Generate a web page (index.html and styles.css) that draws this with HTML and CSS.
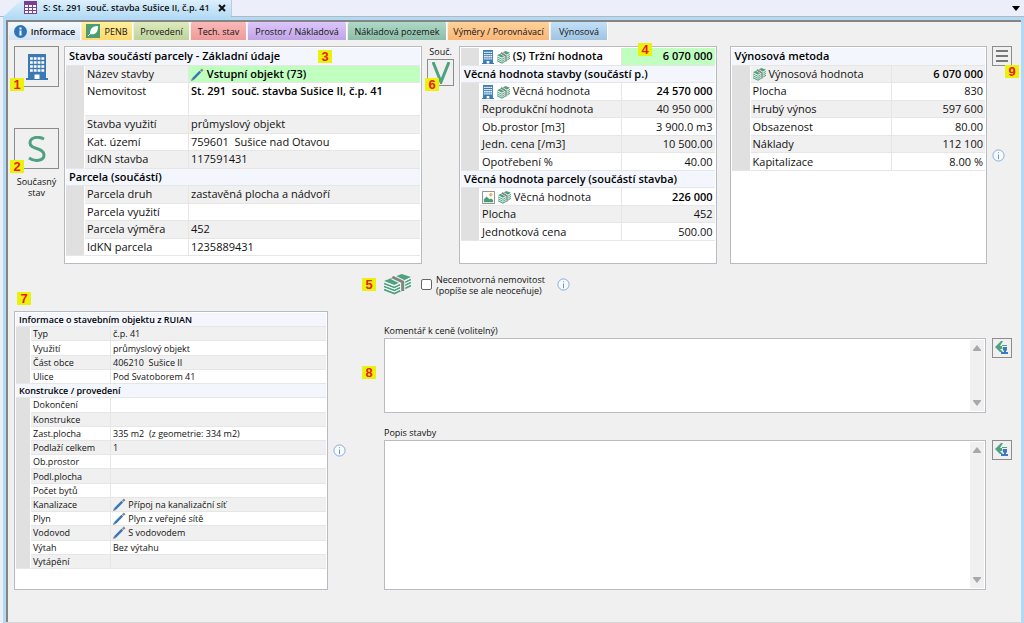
FILE: index.html
```
<!DOCTYPE html>
<html lang="cs">
<head>
  <meta charset="UTF-8">
  <meta name="viewport" content="width=device-width, initial-scale=1.0">
  <title>St. 291 souč. stavba Sušice II, č.p. 41</title>
  <link rel="stylesheet" href="styles.css">
</head>
<body>
  <!-- Shared icons -->
  <svg class="sprite" aria-hidden="true">
    <symbol id="building" viewBox="0 0 22 26" preserveAspectRatio="none">
      <path fill="#3b79b5" d="M2 0h18v24h2v2H0v-2h2z"/>
      <path fill="none" stroke="#fff" stroke-width="2.400" stroke-dasharray="2.800 1" d="M4 4.500h14.200M4 8.500h14.200M4 12.500h14.200M4 16.500h14.200"/>
      <path fill="#fff" d="M8.500 20.500h5V25h-5z"/>
    </symbol>
    <symbol id="money" viewBox="0 0 26 21" preserveAspectRatio="none">
      <path fill="#4fa27f" d="M0 7L17 0l9 3-16 8z"/>
      <path fill="none" stroke="#4fa27f" stroke-width="2" d="M0 9.500l10 4 16-8M0 12.500l10 4 16-8M0 15.500l10 4 16-8"/>
      <path fill="none" stroke="#f4f8f6" d="M0 8l10 4 16-8M0 11l10 4 16-8M0 14l10 4 16-8"/>
      <path fill="none" stroke="#f4f8f6" stroke-width="5" d="M8 3l10 5v9"/>
      <path fill="none" stroke="#828685" stroke-width="3" d="M8 3l10 5v9"/>
    </symbol>
    <symbol id="pencil" viewBox="0 0 14 14">
      <path stroke="#3877b8" stroke-width="2.600" d="M2 12l8-8"/>
      <path stroke="#888" stroke-width="2.600" d="M10.500 3.500l2-2"/>
      <path fill="#777" d="M0 14l1-3 2 2z"/>
    </symbol>
    <symbol id="info" viewBox="0 0 14 14">
      <circle cx="7" cy="7" r="6" fill="#f7faff" stroke="#7fa6d6"/>
      <path stroke="#5c8cc6" d="M7 6v5M7 3.500v1"/>
    </symbol>
    <symbol id="landscape" viewBox="0 0 14 14">
      <path fill="#fff" stroke="#888" d="M.5.5h13v13H.5z"/>
      <path fill="#4a9b78" d="M2 12V9l3-3 3 3 2-1 2 2v2z"/>
      <circle cx="9.500" cy="4" r="1.800" fill="#f0b45c"/>
    </symbol>
    <symbol id="restore" viewBox="0 0 14 14">
      <path fill="#4fa27f" d="M0 6l6-6h2L5 5h7v3H5l4 4H6z"/>
      <path fill="#f0f0f0" d="M7 5h7v9H5v-3h3z"/>
      <path fill="#4fa27f" d="M7 4h5v1H7z"/>
      <path fill="#3b79c4" d="M8 6h4v3l-1 1v1h2v2H6v-2h3v-1L8 9z"/>
    </symbol>
    <symbol id="up" viewBox="0 0 8 6"><path fill="#a8a8a8" d="M4 0l4 5v1H0V5z"/></symbol>
    <symbol id="down" viewBox="0 0 8 6"><path fill="#a8a8a8" d="M0 0h8v1L4 6 0 1z"/></symbol>
  </svg>

  <header class="titlebar">
    <div class="doc-tab">
      <svg width="13" height="13" viewBox="0 0 13 13"><path fill="#7a3f92" d="M0 0h13v13H0z"/><path fill="#fff" d="M1 4h3v2H1zM5 4h3v2H5zM9 4h3v2H9zM1 7h3v2H1zM5 7h3v2H5zM9 7h3v2H9zM1 10h3v2H1zM5 10h3v2H5zM9 10h3v2H9z"/></svg>
      <span class="doc-name">S: St. 291&nbsp; souč. stavba Sušice II, č.p. 41</span>
      <button class="doc-close" aria-label="Zavřít"><svg width="8" height="8" viewBox="0 0 8 8"><path stroke="#111" stroke-width="2" d="M1 1l6 6M7 1L1 7"/></svg></button>
    </div>
    <button class="doc-list" aria-label="Seznam oken"><svg width="8" height="5" viewBox="0 0 8 5"><path d="M0 0h8L4 5z"/></svg></button>
  </header>

  <main class="frame">
    <nav class="tabs">
      <button class="tab active"><svg width="13" height="13" viewBox="0 0 13 13"><circle cx="6.500" cy="6.500" r="6.500" fill="#2e75b6"/><path stroke="#fff" stroke-width="2" d="M6.500 5.500v5M6.500 2.500v2"/></svg>Informace</button>
      <button class="tab penb"><svg width="14" height="14" viewBox="0 0 14 14"><path fill="#4a9d74" d="M0 0h14v14H0z"/><path fill="#fff" d="M12 2c0 7-3 9-8 8 0-5 2-8 8-8z"/><path stroke="#fff" d="M2 12l3-3"/></svg>PENB</button>
      <button class="tab green">Provedení</button>
      <button class="tab red">Tech. stav</button>
      <button class="tab purple">Prostor / Nákladová</button>
      <button class="tab teal">Nákladová pozemek</button>
      <button class="tab orange">Výměry / Porovnávací</button>
      <button class="tab blue">Výnosová</button>
    </nav>

    <section class="upper">
      <div class="side">
        <div class="side-item">
          <button class="big-btn" aria-label="Stavba"><svg width="22" height="26"><use href="#building"/></svg></button>
          <span class="badge corner">1</span>
        </div>
        <div class="side-item">
          <button class="big-btn" aria-label="Současný stav"><svg width="18" height="26" viewBox="0 0 18 26"><path fill="none" stroke="#4fa27f" stroke-width="3" d="M16 3C10 0 2 1 2 7c0 7 14 4 14 12 0 6-9 7-15 3"/></svg></button>
          <span class="badge corner">2</span>
          <span class="side-label">Současný stav</span>
        </div>
      </div>

      <div class="panel basic">
        <span class="badge b3">3</span>
        <table class="props">
          <colgroup><col class="c-gutter"><col class="c-name"><col></colgroup>
          <tr class="head"><th colspan="3">Stavba součástí parcely - Základní údaje</th></tr>
          <tr class="alt"><td class="gutter" rowspan="5"></td><td>Název stavby</td><td class="hit strong"><svg width="13" height="13"><use href="#pencil"/></svg> Vstupní objekt (73)</td></tr>
          <tr class="tall"><td>Nemovitost</td><td class="strong">St. 291&nbsp; souč. stavba Sušice II, č.p. 41</td></tr>
          <tr class="alt"><td>Stavba využití</td><td>průmyslový objekt</td></tr>
          <tr><td>Kat. území</td><td>759601&nbsp; Sušice nad Otavou</td></tr>
          <tr class="alt"><td>IdKN stavba</td><td>117591431</td></tr>
          <tr class="head"><th colspan="3">Parcela (součástí)</th></tr>
          <tr class="alt"><td class="gutter" rowspan="4"></td><td>Parcela druh</td><td>zastavěná plocha a nádvoří</td></tr>
          <tr><td>Parcela využití</td><td></td></tr>
          <tr class="alt"><td>Parcela výměra</td><td>452</td></tr>
          <tr><td>IdKN parcela</td><td>1235889431</td></tr>
        </table>
      </div>

      <div class="part">
        <span>Souč.</span>
        <button class="part-btn" aria-label="Věcná hodnota"><svg width="18" height="22" viewBox="0 0 18 22"><path fill="none" stroke="#4fa27f" stroke-width="3" d="M1 0l8 20 8-20"/></svg></button>
        <span class="badge corner">6</span>
      </div>

      <div class="panel values">
        <span class="badge b4">4</span>
        <table class="props numbers eleven">
          <colgroup><col class="c-gutter"><col><col class="c-value"></colgroup>
          <tr><td class="gutter"></td><td class="strong"><svg width="12" height="14"><use href="#building"/></svg> <svg width="13" height="13"><use href="#money"/></svg> (S) Tržní hodnota</td><td class="hit strong">6 070 000</td></tr>
          <tr class="head"><th colspan="3">Věcná hodnota stavby (součástí p.)</th></tr>
          <tr><td class="gutter" rowspan="5"></td><td><svg width="12" height="14"><use href="#building"/></svg> <svg width="13" height="13"><use href="#money"/></svg> Věcná hodnota</td><td class="strong">24 570 000</td></tr>
          <tr class="alt"><td>Reprodukční hodnota</td><td>40 950 000</td></tr>
          <tr><td>Ob.prostor [m3]</td><td>3 900.0 m3</td></tr>
          <tr class="alt"><td>Jedn. cena [/m3]</td><td>10 500.00</td></tr>
          <tr><td>Opotřebení %</td><td>40.00</td></tr>
          <tr class="head"><th colspan="3">Věcná hodnota parcely (součástí stavba)</th></tr>
          <tr><td class="gutter" rowspan="3"></td><td><svg width="13" height="13"><use href="#landscape"/></svg> <svg width="13" height="13"><use href="#money"/></svg> Věcná hodnota</td><td class="strong">226 000</td></tr>
          <tr class="alt"><td>Plocha</td><td>452</td></tr>
          <tr><td>Jednotková cena</td><td>500.00</td></tr>
        </table>
      </div>

      <div class="panel income">
        <table class="props numbers seven">
          <colgroup><col class="c-gutter"><col><col class="c-value"></colgroup>
          <tr class="head"><th colspan="3">Výnosová metoda</th></tr>
          <tr class="alt"><td class="gutter" rowspan="6"></td><td><svg width="13" height="13"><use href="#money"/></svg> Výnosová hodnota</td><td class="strong">6 070 000</td></tr>
          <tr><td>Plocha</td><td>830</td></tr>
          <tr class="alt"><td>Hrubý výnos</td><td>597 600</td></tr>
          <tr><td>Obsazenost</td><td>80.00</td></tr>
          <tr class="alt"><td>Náklady</td><td>112 100</td></tr>
          <tr><td>Kapitalizace</td><td>8.00 %</td></tr>
        </table>
      </div>

      <div class="tools">
        <button class="small-btn" aria-label="Nabídka"><svg width="12" height="14" viewBox="0 0 12 14"><path stroke="#777" stroke-width="2" d="M0 2h12M0 7h12M0 12h12"/></svg></button>
        <span class="badge b9">9</span>
        <svg class="info" width="13" height="13"><use href="#info"/></svg>
      </div>
    </section>

    <section class="lower">
      <div class="registry">
        <div class="registry-top"><span class="badge">7</span></div>
        <div class="panel">
          <table class="props small">
            <colgroup><col class="c-gutter"><col class="c-name"><col></colgroup>
            <tr class="head"><th colspan="3">Informace o stavebním objektu z RUIAN</th></tr>
            <tr class="alt"><td class="gutter" rowspan="4"></td><td>Typ</td><td>č.p. 41</td></tr>
            <tr><td>Využití</td><td>průmyslový objekt</td></tr>
            <tr class="alt"><td>Část obce</td><td>406210&nbsp; Sušice II</td></tr>
            <tr><td>Ulice</td><td>Pod Svatoborem 41</td></tr>
            <tr class="head"><th colspan="3">Konstrukce / provedení</th></tr>
            <tr><td class="gutter" rowspan="12"></td><td>Dokončení</td><td></td></tr>
            <tr class="alt"><td>Konstrukce</td><td></td></tr>
            <tr><td>Zast.plocha</td><td>335 m2&nbsp; (z geometrie: 334 m2)</td></tr>
            <tr class="alt"><td>Podlaží celkem</td><td>1</td></tr>
            <tr><td>Ob.prostor</td><td></td></tr>
            <tr class="alt"><td>Podl.plocha</td><td></td></tr>
            <tr><td>Počet bytů</td><td></td></tr>
            <tr class="alt"><td>Kanalizace</td><td><svg width="13" height="13"><use href="#pencil"/></svg> Přípoj na kanalizační síť</td></tr>
            <tr><td>Plyn</td><td><svg width="13" height="13"><use href="#pencil"/></svg> Plyn z veřejné sítě</td></tr>
            <tr class="alt"><td>Vodovod</td><td><svg width="13" height="13"><use href="#pencil"/></svg> S vodovodem</td></tr>
            <tr><td>Výtah</td><td>Bez výtahu</td></tr>
            <tr class="alt"><td>Vytápění</td><td></td></tr>
          </table>
        </div>
      </div>

      <div class="middle">
        <svg class="info" width="13" height="13"><use href="#info"/></svg>
      </div>

      <div class="notes">
        <div class="option">
          <span class="badge outside">5</span>
          <svg width="27" height="21"><use href="#money"/></svg>
          <input type="checkbox" id="no-price">
          <label for="no-price">Necenotvorná nemovitost<br>(popíše se ale neoceňuje)</label>
          <svg class="info" width="13" height="13"><use href="#info"/></svg>
        </div>

        <label class="note-label" for="comment">Komentář k ceně (volitelný)</label>
        <div class="note-row comment">
          <span class="badge outside">8</span>
          <div class="memo">
            <textarea id="comment"></textarea>
            <div class="scroll"><svg width="8" height="6"><use href="#up"/></svg><svg width="8" height="6"><use href="#down"/></svg></div>
          </div>
          <button class="small-btn" aria-label="Vrátit komentář"><svg width="14" height="14"><use href="#restore"/></svg></button>
        </div>

        <label class="note-label" for="description">Popis stavby</label>
        <div class="note-row description">
          <div class="memo">
            <textarea id="description"></textarea>
            <div class="scroll"><svg width="8" height="6"><use href="#up"/></svg><svg width="8" height="6"><use href="#down"/></svg></div>
          </div>
          <button class="small-btn" aria-label="Vrátit popis"><svg width="14" height="14"><use href="#restore"/></svg></button>
        </div>
      </div>
    </section>
  </main>
</body>
</html>
```

FILE: styles.css
```
/* Global Styles */
* {
  box-sizing: border-box;
}

body {
  margin: 0;
  min-height: 100vh;
  display: flex;
  flex-direction: column;
  background: #eceefa;
  color: #111;
  font-family: "Open Sans", "Noto Sans", sans-serif;
  font-size: 9px;
  line-height: 11px;
}

button {
  font: inherit;
  color: inherit;
  padding: 0;
  margin: 0;
}

.sprite {
  position: absolute;
  width: 0;
  height: 0;
}

/* Title bar */
.titlebar {
  height: 17px;
  display: flex;
  justify-content: space-between;
  border-bottom: 1px solid #b4b8c0;
}

.doc-tab {
  display: flex;
  align-items: center;
  height: 17px;
  margin-left: 3px;
  padding: 0 5px 2px 21px;
  background: linear-gradient(#dceffc, #b5dcf5);
  border-right: 1px solid #a9b4c0;
  clip-path: polygon(18px 0, 100% 0, 100% 100%, 0 100%);
}

.doc-name {
  margin: 0 8px 0 6px;
  font-weight: 600;
  color: #111;
}

.doc-close,
.doc-list {
  display: flex;
  align-items: center;
  background: none;
  border: none;
}

.doc-list {
  margin-right: 4px;
}

/* Main frame */
.frame {
  flex: 1;
  margin-left: 3px;
  background: #f0f0f0;
  border: 3px solid #b2daf5;
  border-bottom: 1px solid #d5d5d5;
  box-shadow: inset 2px 2px 0 #858585;
  padding: 2px 0 0 3px;
}

/* Tabs */
.tabs {
  display: grid;
  grid-template-columns: 72px 51px 56px 56px 99px 99px 102px 57px;
  gap: 1px;
  height: 18px;
}

.tab {
  display: flex;
  align-items: center;
  justify-content: center;
  gap: 4px;
  white-space: nowrap;
  border: none;
  border-right: 1px solid #fff;
  border-radius: 2px 2px 0 0;
}

.active {
  font-weight: 600;
  background: linear-gradient(#f5f9fe, #d3e2f5);
}

.penb {
  background: linear-gradient(#fff09c, #fed86c);
}

.green {
  background: linear-gradient(#dcebbc, #bfd39c);
}

.red {
  background: linear-gradient(#fab8b8, #ee9a9a);
}

.purple {
  background: linear-gradient(#dcc6fb, #bfa3e4);
}

.teal {
  background: linear-gradient(#aed8c6, #8dbda9);
}

.orange {
  background: linear-gradient(#ffd29a, #fbb677);
}

.blue {
  background: linear-gradient(#c3e0f8, #9fc4e2);
}

/* Number badges */
.badge {
  display: block;
  width: 14px;
  height: 13px;
  background: #e8f20c;
  color: #f01818;
  font: bold 13px/13px "Liberation Sans", Arial, sans-serif;
  text-align: center;
}

.corner {
  position: absolute;
  left: -4px;
  top: 32px;
}

.part .corner {
  left: -2px;
}

.b3 {
  position: absolute;
  left: 253px;
  top: 3px;
}

.b4 {
  position: absolute;
  left: 178px;
  top: -4px;
}

.b9 {
  position: absolute;
  left: 13px;
  top: 19px;
}

.outside {
  position: absolute;
  left: -22px;
}

/* Upper part */
.upper {
  display: flex;
  height: 218px;
  margin-top: 6px;
  padding: 0 9px 0 5px;
}

.side {
  width: 50px;
  flex: none;
}

.side-item {
  position: relative;
  width: 45px;
  height: 82px;
}

.big-btn,
.part-btn,
.small-btn {
  display: flex;
  align-items: center;
  justify-content: center;
  background: #f0f0f0;
  border: 1px solid #8c8c8c;
}

.big-btn {
  width: 45px;
  height: 41px;
}

.side-label {
  display: block;
  margin-top: 7px;
  text-align: center;
}

.panel {
  position: relative;
  background: #fff;
  border: 1px solid #b9bac2;
  padding: 1px;
}

.basic {
  flex: 359;
}

.values,
.income {
  flex: 257;
}

.income {
  margin-left: 13px;
}

.part {
  position: relative;
  flex: none;
  width: 27px;
  margin: 0 5px;
  text-align: center;
}

.part-btn {
  width: 27px;
  height: 27px;
  margin-top: 2px;
}

.tools {
  position: relative;
  flex: none;
  width: 20px;
  margin-left: 5px;
}

.small-btn {
  flex: none;
  width: 20px;
  height: 20px;
}

.tools .info {
  display: block;
  margin-top: 83px;
}

/* Property tables */
.props {
  width: 100%;
  height: 208px;
  table-layout: fixed;
  border-spacing: 0;
  font-size: 11px;
  line-height: 16px;
}

.eleven {
  height: 193px;
}

.seven {
  height: 123px;
}

.props td,
.props th {
  padding: 0 2px;
  text-align: left;
  white-space: nowrap;
  border-bottom: 1px solid #e6e6e6;
}

.props td {
  border-right: 1px solid #e6e6e6;
}

.props td:last-child {
  border-right: none;
}

.props svg {
  display: inline-block;
  vertical-align: middle;
}

.c-gutter {
  width: 19px;
}

.c-name {
  width: 104px;
}

.c-value {
  width: 93px;
}

.props .head th {
  padding-left: 3px;
  background: #f3f7fd;
  color: #000;
  font-weight: 600;
}

.alt td {
  background: #f0f0f0;
}

.props .gutter {
  background: #e0e0e0;
  border-right: 1px solid #fff;
}

.tall td {
  height: 33px;
  vertical-align: top;
}

.strong {
  color: #000;
  font-weight: 600;
}

.props .hit {
  background: #c0ffc0;
}

.numbers td:last-child {
  text-align: right;
}

.small {
  height: 256px;
  font-size: 9px;
  line-height: 13px;
}

.small svg {
  vertical-align: top;
}

.small .c-gutter {
  width: 15px;
}

.small .c-name {
  width: 80px;
}

/* Lower part */
.lower {
  display: flex;
  padding: 0 9px 0 5px;
}

.registry {
  flex: 314;
}

.registry-top {
  height: 47px;
  padding: 28px 0 0 3px;
}

.registry .panel {
  height: 279px;
}

.middle {
  flex: none;
  width: 56px;
  padding: 180px 0 0 5px;
}

.notes {
  flex: 628;
}

.option {
  position: relative;
  display: flex;
  align-items: center;
  height: 41px;
}

.option input {
  appearance: none;
  width: 11px;
  height: 11px;
  margin: 0 4px 0 10px;
  background: #fff;
  border: 1px solid #666;
  border-radius: 2px;
}

.option .info {
  margin-left: 12px;
}

.note-label {
  display: block;
  height: 33px;
  padding-top: 20px;
}

.comment + .note-label {
  height: 27px;
  padding-top: 14px;
}

.note-row {
  position: relative;
  display: flex;
  gap: 6px;
}

.comment {
  height: 75px;
}

.comment .badge {
  top: 28px;
}

.description {
  height: 150px;
}

.memo {
  flex: 1;
  display: flex;
  background: #fff;
  border: 1px solid #b9bac2;
  padding: 1px;
}

.memo textarea {
  flex: 1;
  padding: 2px;
  border: none;
  outline: none;
  resize: none;
  background: #fff;
  font: inherit;
}

.scroll {
  width: 14px;
  display: flex;
  flex-direction: column;
  align-items: center;
  justify-content: space-between;
  padding: 5px 0;
  background: #f0f0f0;
}
```
